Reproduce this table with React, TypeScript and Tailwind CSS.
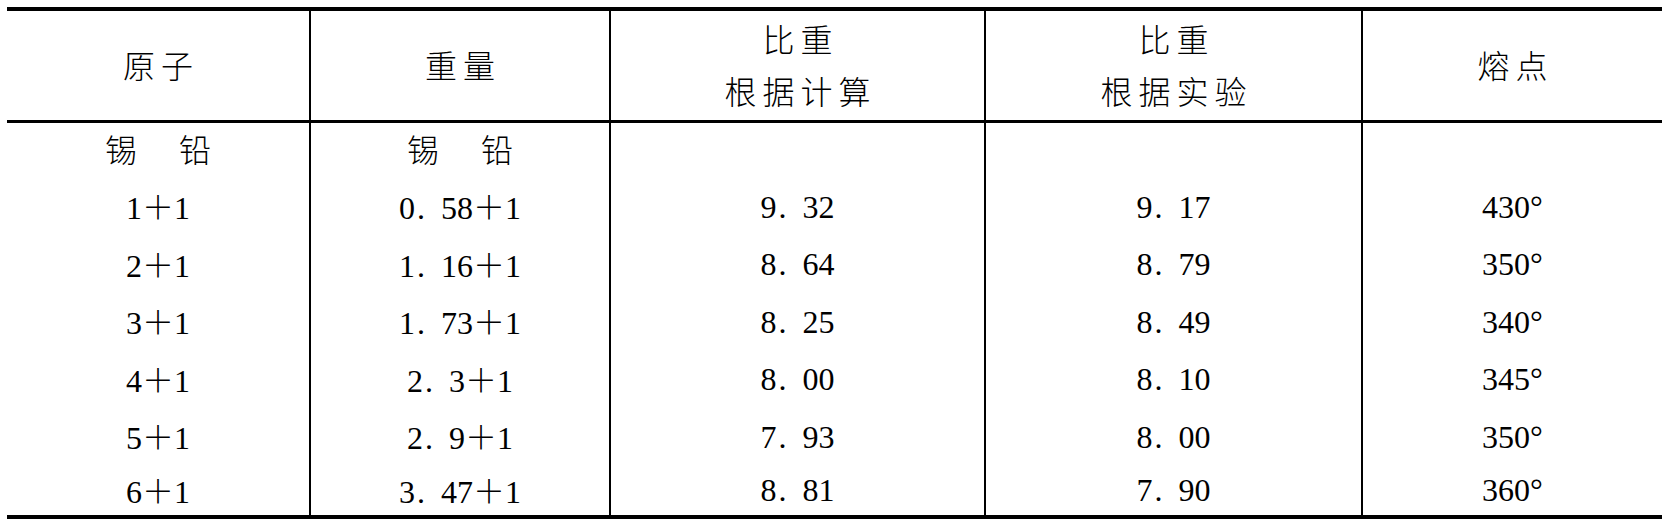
import React from "react";

const headers: string[][] = [["原子"], ["重量"], ["比重", "根据计算"], ["比重", "根据实验"], ["熔点"]];

const data: string[][] = [
  ["1+1", "0.58+1", "9.32", "9.17", "430°"],
  ["2+1", "1.16+1", "8.64", "8.79", "350°"],
  ["3+1", "1.73+1", "8.25", "8.49", "340°"],
  ["4+1", "2.3+1", "8.00", "8.10", "345°"],
  ["5+1", "2.9+1", "7.93", "8.00", "350°"],
  ["6+1", "3.47+1", "8.81", "7.90", "360°"],
];

const rowHeights = ["h-[57.5px]", "h-[57.5px]", "h-[57.5px]", "h-[57.5px]", "h-[57.5px]", "h-[49.5px]"];

function cellBorder(i: number) {
  return i < 4 ? "border-r-2 border-black" : "";
}

function Value({ v }: { v: string }) {
  const parts = v.split(/([.+])/);
  return (
    <span className="inline-flex items-baseline whitespace-pre">
      {parts.map((p, k) => {
        if (p === ".") {
          return (
            <span key={k} className="inline-block w-[26px] pl-[2px] text-left">
              .
            </span>
          );
        }
        if (p === "+") {
          return (
            <span key={k} className="inline-block w-[32px] text-center font-light font-['Noto_Sans_CJK_SC',sans-serif]">
              ＋
            </span>
          );
        }
        return <span key={k}>{p}</span>;
      })}
    </span>
  );
}

export default function App() {
  return (
    <div className="w-[1674px] h-[527px] bg-white pt-[7px] pl-[7px] text-black font-light font-['Liberation_Serif','Noto_Sans_CJK_SC',serif] text-[32px]">
      <div className="grid grid-cols-[304px_300px_375px_377px_299px] w-[1655px] border-t-4 border-b-4 border-black">
        {headers.map((lines, i) => (
          <div
            key={"h" + i}
            className={`h-[112px] border-b-[3px] border-black flex flex-col items-center justify-center leading-[52px] tracking-[6px] pt-[2px] ${cellBorder(i)}`}
          >
            {lines.map((l, j) => (
              <div key={j} className="pl-[6px]">{l}</div>
            ))}
          </div>
        ))}
        {[0, 1, 2, 3, 4].map((i) => (
          <div key={"t" + i} className={`h-[55px] flex items-center justify-center ${cellBorder(i)}`}>
            {i < 2 ? (
              <span className="flex">
                <span>锡</span>
                <span className="ml-[42px]">铅</span>
              </span>
            ) : null}
          </div>
        ))}
        {data.map((row, r) =>
          row.map((v, i) => (
            <div
              key={r + "-" + i}
              className={`${rowHeights[r]} flex items-center justify-center leading-none ${cellBorder(i)}`}
            >
              <Value v={v} />
            </div>
          ))
        )}
      </div>
    </div>
  );
}
